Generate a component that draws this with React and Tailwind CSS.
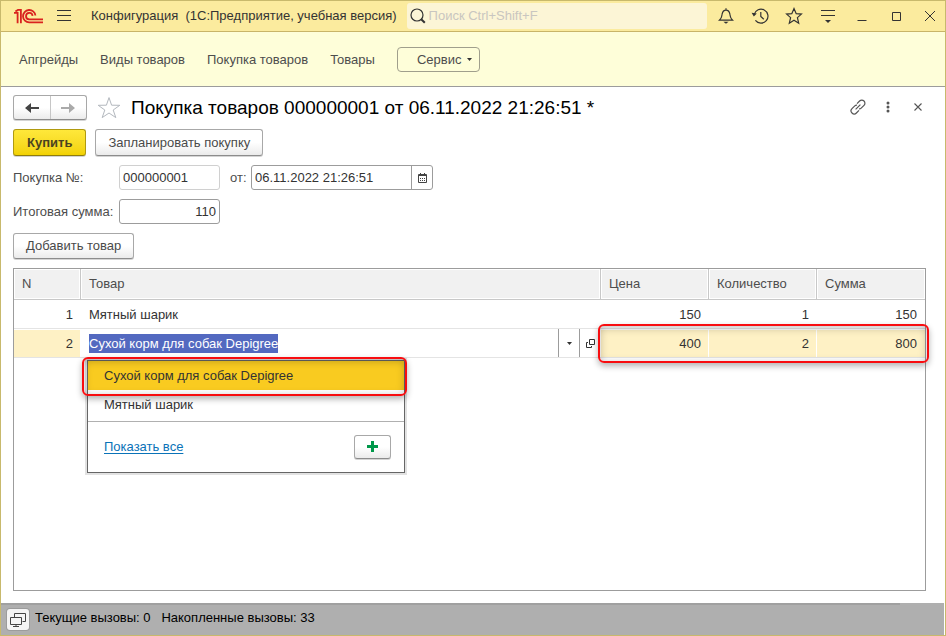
import { useEffect, useRef } from "react";

const navLinks = ["Апгрейды", "Виды товаров", "Покупка товаров", "Товары"];

const plainButton =
  "rounded-[3px] border border-[#a8a8a8] border-b-[#8c8c8c] bg-linear-to-b from-white from-50% to-[#ebebeb] text-[#4a4a4a] shadow-[0_1px_0_#d4d4d4]";

function IconButton({ label, children }) {
  return (
    <button type="button" aria-label={label} className="flex h-6 w-6 shrink-0 items-center justify-center">
      {children}
    </button>
  );
}

function Logo() {
  return (
    <svg width="30" height="15" viewBox="0 0 30 15" fill="none" stroke="#d9231f" strokeWidth="1.8" role="img" aria-label="1С">
      <path d="M0 3.8H3.6V14.2M1.4 2.6 4 .9H6.9V14.2" />
      <path d="M21.4 6.5A6.2 6.2 0 1 0 15.2 13.4H29" />
      <path d="M18.6 6.8A3.3 3.3 0 1 0 15.2 10.4H29" />
    </svg>
  );
}

function TitleBar() {
  return (
    <header className="flex h-[31px] items-center border-b border-[#c8b468] bg-[#fbeb9e] pr-[3px] pl-[13px]">
      <Logo />
      <button type="button" aria-label="Меню" className="ml-3 flex h-6 w-4 items-center justify-center">
        <svg width="16" height="12" viewBox="0 0 16 12" stroke="#333" fill="none">
          <path d="M1 .5H15M1 5.5H15M1 10.5H15" />
        </svg>
      </button>
      <h1 className="ml-[19px] shrink-0 text-[13px] whitespace-pre text-[#333]">
        Конфигурация  (1С:Предприятие, учебная версия)
      </h1>
      <label className="mr-[7px] ml-[10px] flex h-[26px] flex-1 items-center rounded-[3px] bg-[#fcf5d6] pl-[3px]">
        <svg width="16" height="16" viewBox="0 0 16 16" fill="none" stroke="#333">
          <circle cx="7" cy="7" r="6" strokeWidth="1.2" />
          <path d="M11.2 11.2 14.8 14.8" strokeWidth="2" />
        </svg>
        <input
          type="text"
          aria-label="Поиск"
          placeholder="Поиск Ctrl+Shift+F"
          className="ml-[3px] min-w-0 flex-1 bg-transparent text-[13px] outline-none placeholder:text-[#c9c6c0]"
        />
      </label>
      <div className="flex gap-[10px]">
        <IconButton label="Уведомления">
          <svg width="16" height="16" viewBox="0 0 16 16" fill="none" stroke="#333" strokeWidth="1.2">
            <path d="M8 .3V2M1.4 12.2C4.2 9.6 3.4 9 4.1 6.2 4.6 3.6 6 2.2 8 2.2S11.4 3.6 11.9 6.2C12.6 9 11.8 9.6 14.6 12.2Z" />
            <path d="M5.4 13.8H10.6L8 15.8Z" fill="#333" stroke="none" />
          </svg>
        </IconButton>
        <IconButton label="История">
          <svg width="18" height="16" viewBox="0 0 18 16" fill="none" stroke="#333" strokeWidth="1.2">
            <path d="M3.2 6.4A7 7 0 1 1 4.4 12.4" />
            <path d="M9.8 4V8.4L12.8 11.2" />
            <path d="M.6 4.8 5.8 5.4 2.8 8.4Z" fill="#333" stroke="none" />
          </svg>
        </IconButton>
        <IconButton label="Избранное">
          <svg width="18" height="18" viewBox="0 0 18 18" fill="none" stroke="#333" strokeWidth="1.2">
            <path d="M9 1.6 11.2 6.7 16.4 7.1 12.4 10.6 13.7 16.2 9 13.2 4.3 16.2 5.6 10.6 1.6 7.1 6.8 6.7Z" />
          </svg>
        </IconButton>
        <IconButton label="Настройки">
          <svg width="14" height="14" viewBox="0 0 14 14" stroke="#333" strokeWidth="1.2" fill="none">
            <path d="M0 1.5H14M0 6.5H14" />
            <path d="M4 11H10L7 14Z" fill="#333" stroke="none" />
          </svg>
        </IconButton>
        <IconButton label="Свернуть">
          <svg width="10" height="10" viewBox="0 0 10 10" stroke="#333" fill="none">
            <path d="M.5 9.5H9.5" />
          </svg>
        </IconButton>
        <IconButton label="Развернуть">
          <svg width="10" height="10" viewBox="0 0 10 10" stroke="#333" fill="none">
            <path d="M1.5 1.5H9.5V9.5H1.5Z" />
          </svg>
        </IconButton>
        <IconButton label="Закрыть">
          <svg width="12" height="12" viewBox="0 0 12 12" stroke="#333" fill="none">
            <path d="M1 1 11 11M11 1 1 11" />
          </svg>
        </IconButton>
      </div>
    </header>
  );
}

function NavBar() {
  return (
    <nav className="flex h-[55px] items-center gap-[22px] border-b border-[#9c9c9c] bg-[#fefed9] pt-px pl-[18px] text-[13px] text-[#4d4d4d]">
      {navLinks.map((text) => (
        <a key={text} href="#">
          {text}
        </a>
      ))}
      <button type="button" className="flex h-[25px] items-center gap-[6px] rounded-[4px] border border-[#a09f8c] pr-[7px] pl-[19px]">
        Сервис
        <svg width="5" height="3" viewBox="0 0 5 3" fill="#333">
          <path d="M0 0H5L2.5 3Z" />
        </svg>
      </button>
    </nav>
  );
}

function DocumentHeader() {
  return (
    <div className="flex h-[25px] items-center">
      <div className={"flex h-[25px] w-[74px] overflow-hidden " + plainButton}>
        <button type="button" aria-label="Назад" className="flex flex-1 items-center justify-center border-r border-[#c6c6c6]">
          <svg width="14" height="10" viewBox="0 0 14 10" fill="#444">
            <path d="M0 5 6 0V4H14V6H6V10Z" />
          </svg>
        </button>
        <button type="button" aria-label="Вперёд" className="flex flex-1 items-center justify-center">
          <svg width="14" height="10" viewBox="0 0 14 10" fill="#aaa">
            <path d="M14 5 8 0V4H0V6H8V10Z" />
          </svg>
        </button>
      </div>
      <button type="button" aria-label="В избранное" className="ml-[10px]">
        <svg width="24" height="24" viewBox="0 0 24 24" fill="none" stroke="#b3b8be">
          <path d="M12 1.6 14.6 9.2 22.8 9.3 16.2 14 18.8 21.6 12 17 5.2 21.6 7.8 14 1.2 9.3 9.4 9.2Z" />
        </svg>
      </button>
      <h2 className="ml-[10px] text-[19px] leading-6 whitespace-nowrap text-black">Покупка товаров 000000001 от 06.11.2022 21:26:51 *</h2>
      <div className="-mr-1 ml-auto flex items-center gap-[6px] self-start">
        <IconButton label="Ссылка">
          <svg width="16" height="16" viewBox="0 0 16 16" fill="none" stroke="#555" strokeWidth="1.2">
            <path d="M7 4.6 9.6 2A3.1 3.1 0 0 1 14 6.4L11.2 9.2C10.6 9.8 9.8 10 9 9.9" />
            <path d="M9 11.4 6.4 14A3.1 3.1 0 0 1 2 9.6L4.8 6.8C5.4 6.2 6.2 6 7 6.1" />
            <path d="M5.6 10.4 10.4 5.6" />
          </svg>
        </IconButton>
        <IconButton label="Ещё">
          <svg width="4" height="12" viewBox="0 0 4 12" fill="#555">
            <circle cx="2" cy="2" r="1.5" />
            <circle cx="2" cy="6" r="1.5" />
            <circle cx="2" cy="10" r="1.5" />
          </svg>
        </IconButton>
        <IconButton label="Закрыть документ">
          <svg width="8" height="8" viewBox="0 0 8 8" stroke="#555" strokeWidth="1.1" fill="none">
            <path d="M.5 .5 7.5 7.5M7.5 .5 .5 7.5" />
          </svg>
        </IconButton>
      </div>
    </div>
  );
}

function HeadCell({ children }) {
  return (
    <th scope="col" className="h-[31px] border-r border-b border-[#c8c8c8] p-px text-left font-normal last:border-r-0">
      <div className="flex h-[28px] items-center bg-[#f1f1f1] pl-[7px] text-[#4d4d4d]">{children}</div>
    </th>
  );
}

function NumberCell({ children, active }) {
  return (
    <td className="h-[29px] border-b border-[#e4e4e4] p-0 text-right">
      <div
        className={
          active
            ? "mr-px flex h-[27px] items-center justify-end bg-[#fef1c5] pt-px pr-[7px]"
            : "flex h-[27px] items-center justify-end pt-px pr-2"
        }
      >
        {children}
      </div>
    </td>
  );
}

function SuggestionList() {
  return (
    <div className="absolute top-[31px] left-[6px] z-10 w-[318px] border border-[#666] bg-white text-[#333] shadow-[0_0_0_2px_#e2e2e2]">
      <div className="flex h-[29px] items-center bg-[#f9cb20] pl-4">Сухой корм для собак Depigree</div>
      <div className="flex h-[32px] items-center border-b border-[#b0b0b0] pb-px pl-4">Мятный шарик</div>
      <div className="flex h-[50px] items-center justify-between pr-[13px] pb-px pl-4">
        <a href="#" className="pt-px text-[#0a73b8] underline underline-offset-2">
          Показать все
        </a>
        <button type="button" aria-label="Создать" className={"flex h-[24px] w-[37px] items-center justify-center " + plainButton}>
          <svg width="11" height="11" viewBox="0 0 11 11" fill="#00984a">
            <path d="M4 0H7V4H11V7H7V11H4V7H0V4H4Z" />
          </svg>
        </button>
      </div>
      <div className="pointer-events-none absolute -top-[4px] -right-[3px] -left-[6px] h-[39px] rounded-[6px] border-2 border-[#f80d10] shadow-[0_3px_6px_rgba(0,0,0,0.3),inset_0_2px_8px_rgba(0,0,0,0.25)]" />
    </div>
  );
}

function GoodsTable() {
  const productInput = useRef(null);

  useEffect(() => {
    productInput.current.focus();
    productInput.current.select();
  }, []);

  return (
    <div className="mt-[9px] flex-1 border border-[#9c9c9c] bg-white">
      <table className="w-full table-fixed border-separate border-spacing-0 text-[13px] text-[#333]">
        <colgroup>
          <col className="w-[67px]" />
          <col />
          <col className="w-[108px]" />
          <col className="w-[108px]" />
          <col className="w-[108px]" />
        </colgroup>
        <thead>
          <tr>
            <HeadCell>N</HeadCell>
            <HeadCell>Товар</HeadCell>
            <HeadCell>Цена</HeadCell>
            <HeadCell>Количество</HeadCell>
            <HeadCell>Сумма</HeadCell>
          </tr>
        </thead>
        <tbody>
          <tr>
            <NumberCell>1</NumberCell>
            <td className="border-b border-[#e4e4e4] p-0 pt-px pl-2">Мятный шарик</td>
            <NumberCell>150</NumberCell>
            <NumberCell>1</NumberCell>
            <NumberCell>150</NumberCell>
          </tr>
          <tr className="relative">
            <NumberCell active>2</NumberCell>
            <td className="relative border-b border-[#e4e4e4] p-0">
              <div className="flex h-[28px] items-stretch">
                <input
                  ref={productInput}
                  type="text"
                  aria-label="Товар"
                  defaultValue="Сухой корм для собак Depigree"
                  className="min-w-0 flex-1 pt-px pl-2 outline-none selection:bg-[#5369c0] selection:text-white"
                />
                <button type="button" aria-label="Выбрать из списка" className="flex w-[21px] items-center justify-center border-l border-[#9c9c9c]">
                  <svg width="5" height="3" viewBox="0 0 5 3" fill="#333">
                    <path d="M0 0H5L2.5 3Z" />
                  </svg>
                </button>
                <button type="button" aria-label="Открыть" className="flex w-[22px] items-center justify-center border-l border-[#9c9c9c]">
                  <svg width="9" height="9" viewBox="0 0 9 9" fill="none" stroke="#333">
                    <path d="M3.5 .5H8.5V5.5H3.5ZM2 3.5H.5V8.5H5.5V7" />
                  </svg>
                </button>
              </div>
              <SuggestionList />
            </td>
            <NumberCell active>400</NumberCell>
            <NumberCell active>2</NumberCell>
            <td className="border-b border-[#e4e4e4] p-0 text-right">
              <div className="flex h-[27px] items-center justify-end bg-[#fef1c5] pt-px pr-2">800</div>
              <div className="pointer-events-none absolute -top-[5px] -right-[4px] h-[39px] w-[331px] rounded-[6px] border-2 border-[#f80d10] shadow-[0_3px_6px_rgba(0,0,0,0.3),inset_0_2px_8px_rgba(0,0,0,0.25)]" />
            </td>
          </tr>
        </tbody>
      </table>
    </div>
  );
}

function StatusBar() {
  return (
    <footer className="mr-px h-[32px] bg-[#afafaf]">
      <div className="mr-[44px] h-[2px] bg-[#a0a0a0]" />
      <div className="flex h-[27px] items-start pl-[6px] text-[13px] text-black">
        <button type="button" aria-label="Окна" className="mt-1 flex h-[21px] w-[22px] shrink-0 items-center justify-center rounded-[3px] bg-[#f4f4f4] shadow-[0_0_0_1px_#9c9c9c]">
          <svg width="16" height="14" viewBox="0 0 16 14" fill="none" stroke="#444">
            <path d="M4.5 4V.5H15.5V8.5H12.5M.5 4.5H11.5V11.5H.5ZM6 11.5V13M3 13.5H9" />
          </svg>
        </button>
        <span className="ml-[6px] leading-[26px] whitespace-pre">Текущие вызовы: 0   Накопленные вызовы: 33</span>
      </div>
    </footer>
  );
}

export default function App() {
  return (
    <div className="flex min-h-screen flex-col border border-[#c8b96c] bg-white font-['Liberation_Sans',Arial,sans-serif]">
      <TitleBar />
      <NavBar />
      <main className="flex flex-1 flex-col pt-2 pr-[19px] pb-3 pl-3 text-[13px] text-[#4d4d4d]">
        <DocumentHeader />
        <div className="mt-[9px] flex gap-[9px]">
          <button
            type="button"
            className="h-[27px] rounded-[3px] border border-[#b09a10] border-b-[#8f7c0c] bg-linear-to-b from-[#ffe83a] to-[#f2d200] px-[13px] font-bold text-[#4a4320] shadow-[0_1px_0_#d4d4d4]"
          >
            Купить
          </button>
          <button type="button" className={"h-[27px] px-3 " + plainButton}>
            Запланировать покупку
          </button>
        </div>
        <div className="mt-[9px] flex items-center">
          <label htmlFor="number" className="w-[106px]">
            Покупка №:
          </label>
          <input
            id="number"
            type="text"
            defaultValue="000000001"
            className="h-[25px] w-[101px] rounded-[3px] border border-[#d0d0d0] px-[3px] text-[#333]"
          />
          <label htmlFor="date" className="ml-[10px] w-[21px]">
            от:
          </label>
          <div className="flex h-[25px] w-[182px] rounded-[3px] border border-[#9c9c9c]">
            <input id="date" type="text" defaultValue="06.11.2022 21:26:51" className="min-w-0 flex-1 px-[3px] text-[#333] outline-none" />
            <button type="button" aria-label="Календарь" className="flex w-[21px] items-center justify-center border-l border-[#9c9c9c]">
              <svg width="9" height="10" viewBox="0 0 9 10" fill="none" stroke="#444">
                <path d="M.5 1.5H8.5V9.5H.5ZM.5 2.5H8.5M2.5 0V2M6.5 0V2" />
                <path d="M2 5.5H7M2 7.5H7" strokeDasharray="1 1" />
              </svg>
            </button>
          </div>
        </div>
        <div className="mt-[9px] flex items-center">
          <label htmlFor="total" className="w-[106px]">
            Итоговая сумма:
          </label>
          <input
            id="total"
            type="text"
            defaultValue="110"
            className="h-[25px] w-[101px] rounded-[3px] border border-[#9c9c9c] px-[3px] text-right text-[#333]"
          />
        </div>
        <div className="mt-[9px] flex">
          <button type="button" className={"h-[26px] px-3 " + plainButton}>
            Добавить товар
          </button>
        </div>
        <GoodsTable />
      </main>
      <StatusBar />
    </div>
  );
}
